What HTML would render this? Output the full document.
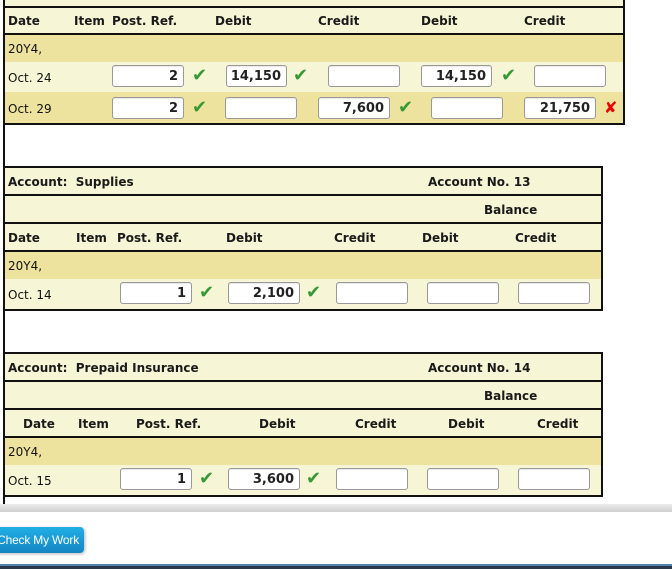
<!DOCTYPE html>
<html><head><meta charset="utf-8"><style>
*{margin:0;padding:0;box-sizing:border-box}
body{width:672px;height:569px;background:#fff;position:relative;overflow:hidden;font-family:"DejaVu Sans","Liberation Sans",sans-serif;font-size:12px;color:#111}
.a{position:absolute}
.l{background:#f6f5d5}
.d{background:#eee39e}
.hl{position:absolute;height:2px;background:#111}
.vl{position:absolute;width:2px;background:#111}
.t{position:absolute;white-space:nowrap;line-height:14px;margin-top:1px}
.b{font-weight:bold;color:#1a1a1a}
.in{position:absolute;height:22px;background:#fff;border:1px solid #999;border-radius:3px;box-shadow:inset 0 1px 1px rgba(0,0,0,.1);text-align:right;padding-right:5px;font-weight:bold;line-height:21px;font-size:13px;color:#222}
.ck{position:absolute;color:#359a35;font-weight:bold;font-size:18px;line-height:14px;margin-left:-1px}
.x{position:absolute;color:#e00;font-weight:bold;font-size:16px;line-height:14px}
</style></head><body>
<div class="vl" style="left:3px;top:0;height:506px"></div>

<div class="a l" style="left:5px;top:0;width:619px;height:34px"></div>
<div class="a d" style="left:5px;top:34px;width:619px;height:28px"></div>
<div class="a l" style="left:5px;top:62px;width:619px;height:30px"></div>
<div class="a d" style="left:5px;top:92px;width:619px;height:32px"></div>
<div class="hl" style="left:3px;top:6px;width:622px"></div>
<div class="hl" style="left:3px;top:33px;width:622px"></div>
<div class="hl" style="left:3px;top:123px;width:622px"></div>
<div class="vl" style="left:623px;top:0;height:125px"></div>
<div class="t b" style="left:8px;top:13px">Date</div>
<div class="t b" style="left:74px;top:13px">Item</div>
<div class="t b" style="left:112px;top:13px">Post. Ref.</div>
<div class="t b" style="left:215px;top:13px">Debit</div>
<div class="t b" style="left:318px;top:13px">Credit</div>
<div class="t b" style="left:421px;top:13px">Debit</div>
<div class="t b" style="left:524px;top:13px">Credit</div>
<div class="t" style="left:8px;top:41px">20Y4,</div>
<div class="t" style="left:8px;top:70px">Oct. 24</div>
<div class="in" style="left:112px;top:65px;width:72px">2</div><div class="ck" style="left:193px;top:69px">✔</div>
<div class="in" style="left:226px;top:65px;width:61px">14,150</div><div class="ck" style="left:294px;top:69px">✔</div>
<div class="in" style="left:328px;top:65px;width:72px"></div>
<div class="in" style="left:421px;top:65px;width:71px">14,150</div><div class="ck" style="left:502px;top:69px">✔</div>
<div class="in" style="left:534px;top:65px;width:72px"></div>
<div class="t" style="left:8px;top:101px">Oct. 29</div>
<div class="in" style="left:112px;top:97px;width:72px">2</div><div class="ck" style="left:193px;top:101px">✔</div>
<div class="in" style="left:225px;top:97px;width:72px"></div>
<div class="in" style="left:318px;top:97px;width:72px">7,600</div><div class="ck" style="left:399px;top:101px">✔</div>
<div class="in" style="left:431px;top:97px;width:72px"></div>
<div class="in" style="left:524px;top:97px;width:72px">21,750</div><div class="x" style="left:604px;top:101px">✘</div>

<div class="a l" style="left:5px;top:167px;width:597px;height:84px"></div>
<div class="a d" style="left:5px;top:251px;width:597px;height:28px"></div>
<div class="a l" style="left:5px;top:279px;width:597px;height:31px"></div>
<div class="hl" style="left:3px;top:166px;width:600px"></div>
<div class="hl" style="left:3px;top:194px;width:600px"></div>
<div class="hl" style="left:3px;top:222px;width:600px"></div>
<div class="hl" style="left:3px;top:250px;width:600px"></div>
<div class="hl" style="left:3px;top:309px;width:600px"></div>
<div class="vl" style="left:601px;top:166px;height:145px"></div>
<div class="t b" style="left:8px;top:174px">Account:&nbsp; Supplies</div>
<div class="t b" style="left:428px;top:174px">Account No. 13</div>
<div class="t b" style="left:484px;top:202px">Balance</div>
<div class="t b" style="left:8px;top:230px">Date</div>
<div class="t b" style="left:76px;top:230px">Item</div>
<div class="t b" style="left:117px;top:230px">Post. Ref.</div>
<div class="t b" style="left:226px;top:230px">Debit</div>
<div class="t b" style="left:334px;top:230px">Credit</div>
<div class="t b" style="left:422px;top:230px">Debit</div>
<div class="t b" style="left:515px;top:230px">Credit</div>
<div class="t" style="left:8px;top:258px">20Y4,</div>
<div class="t" style="left:8px;top:287px">Oct. 14</div>
<div class="in" style="left:120px;top:282px;width:72px">1</div><div class="ck" style="left:200px;top:286px">✔</div>
<div class="in" style="left:228px;top:282px;width:72px">2,100</div><div class="ck" style="left:307px;top:286px">✔</div>
<div class="in" style="left:336px;top:282px;width:72px"></div>
<div class="in" style="left:427px;top:282px;width:72px"></div>
<div class="in" style="left:518px;top:282px;width:72px"></div>

<div class="a l" style="left:5px;top:353px;width:597px;height:84px"></div>
<div class="a d" style="left:5px;top:437px;width:597px;height:28px"></div>
<div class="a l" style="left:5px;top:465px;width:597px;height:31px"></div>
<div class="hl" style="left:3px;top:352px;width:600px"></div>
<div class="hl" style="left:3px;top:380px;width:600px"></div>
<div class="hl" style="left:3px;top:408px;width:600px"></div>
<div class="hl" style="left:3px;top:436px;width:600px"></div>
<div class="hl" style="left:3px;top:495px;width:600px"></div>
<div class="vl" style="left:601px;top:352px;height:145px"></div>
<div class="t b" style="left:8px;top:360px">Account:&nbsp; Prepaid Insurance</div>
<div class="t b" style="left:428px;top:360px">Account No. 14</div>
<div class="t b" style="left:484px;top:388px">Balance</div>
<div class="t b" style="left:23px;top:416px">Date</div>
<div class="t b" style="left:78px;top:416px">Item</div>
<div class="t b" style="left:136px;top:416px">Post. Ref.</div>
<div class="t b" style="left:259px;top:416px">Debit</div>
<div class="t b" style="left:355px;top:416px">Credit</div>
<div class="t b" style="left:448px;top:416px">Debit</div>
<div class="t b" style="left:537px;top:416px">Credit</div>
<div class="t" style="left:8px;top:444px">20Y4,</div>
<div class="t" style="left:8px;top:473px">Oct. 15</div>
<div class="in" style="left:120px;top:468px;width:72px">1</div><div class="ck" style="left:200px;top:472px">✔</div>
<div class="in" style="left:228px;top:468px;width:72px">3,600</div><div class="ck" style="left:307px;top:472px">✔</div>
<div class="in" style="left:336px;top:468px;width:72px"></div>
<div class="in" style="left:427px;top:468px;width:72px"></div>
<div class="in" style="left:518px;top:468px;width:72px"></div>

<div class="a" style="left:0;top:504px;width:672px;height:8px;background:linear-gradient(#ececec,#cfcfcf)"></div>
<div class="a" style="left:-6px;top:527px;width:90px;height:26px;border-radius:4px;background:linear-gradient(#22aee6,#1386c2);box-shadow:1px 1px 3px rgba(0,0,0,.3);color:#fff;font-family:'Liberation Sans',sans-serif;font-size:12px;line-height:26px;text-align:right;padding-right:5px;white-space:nowrap;letter-spacing:-0.2px">Check My Work</div>
<div class="a" style="left:0;top:564px;width:672px;height:2px;background:#4e86b0"></div>
<div class="a" style="left:0;top:566px;width:672px;height:3px;background:#2a3a48"></div>
</body></html>
